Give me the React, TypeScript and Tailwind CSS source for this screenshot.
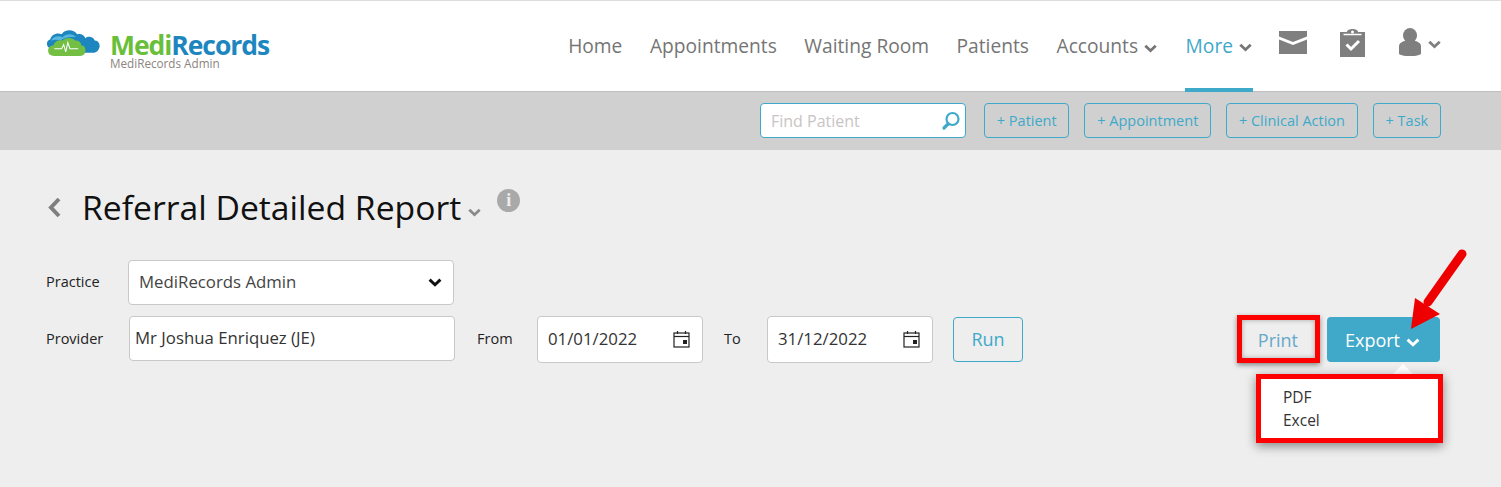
const font = { fontFamily: '"Open Sans", sans-serif' };

function Chevron({ className }: { className: string }) {
  return (
    <svg viewBox="0 0 12 8" className={className} fill="none" stroke="currentColor" strokeWidth="2.6">
      <path d="M1.2 1.4 6 6 10.8 1.4" />
    </svg>
  );
}

function Logo() {
  return (
    <svg width="56" height="29" viewBox="0 0 54 28">
      <path d="M4 19c-3-2-3-7 1-8 1-5 7-7 11-5 3-5 12-5 15 0 4-1 7 1 8 4 3-3 8-1 9 2 4 0 6 5 4 8-1 3-4 4-7 4H30L12 23c-4 0-6-2-8-4z" fill="#1e86bf" />
      <path d="M6 12c2-4 7-5 11-3 3-4 10-4 13 0-6-1-12 0-15 3-3-1-6-1-9 0z" fill="#59b7de" />
      <path d="M9 27c-4 0-6-2-6-5s2-5 5-5c1-4 5-6 9-5 3-3 9-3 12 0 4 0 6 2 6 5 3 0 4 2 4 5s-2 5-5 5z" fill="#72bf44" />
      <path d="M9 20h7l2-4 2 7 2-9 2 6h8" fill="none" stroke="#fff" strokeWidth="1" />
    </svg>
  );
}

function NavLink({ label, caret, active }: { label: string; caret?: boolean; active?: boolean }) {
  return (
    <div className={`flex h-[91px] items-center gap-[6px] ${active ? 'border-b-[4px] border-[#3fa9c9] px-[1px] pt-[4px] text-[#3fa9c9]' : 'pt-[1px] text-[#757575]'}`}>
      <span>{label}</span>
      {caret && <Chevron className="mt-[3px] h-[9px] w-[13px] text-[#757575]" />}
    </div>
  );
}

function ActionButton({ label }: { label: string }) {
  return (
    <button className="h-[35px] rounded-[4px] border border-[#3fa9c9] px-[11.8px] pt-[2px] text-[14.5px] text-[#3fa9c9]">{label}</button>
  );
}

function CalendarIcon() {
  return (
    <svg className="mb-[2px]" width="17" height="18" viewBox="0 0 17 18" fill="none">
      <rect x="1" y="3" width="15" height="14" stroke="#222" strokeWidth="1.2" />
      <path d="M1 6.5h15" stroke="#222" strokeWidth="1.2" />
      <path d="M4.5 1v3M12.5 1v3" stroke="#222" strokeWidth="1.2" />
      <rect x="10" y="10" width="4" height="4" fill="#222" />
    </svg>
  );
}

function DateField({ value }: { value: string }) {
  return (
    <div className="flex h-[47px] w-[166px] items-center justify-between rounded-[4px] border border-[#c8c8c8] bg-white pl-[10px] pr-[12px] text-[16.8px] text-[#333]">
      <span className="mb-[1px]">{value}</span>
      <CalendarIcon />
    </div>
  );
}

export default function App() {
  return (
    <div style={font} className="relative h-[487px] w-[1501px] overflow-hidden bg-[#eeeeee]">
      <header className="flex h-[92px] items-center justify-between border-y border-t-[#dddddd] border-b-[#bfbfbf] bg-white pl-[45px] pr-[60px]">
        <div className="flex items-start gap-[9px]">
          <div className="mt-[5px]">
            <Logo />
          </div>
          <div className="mt-[10px] flex flex-col">
            <span className="text-[26.5px] leading-[24px] font-bold tracking-[-1.05px]">
              <span className="text-[#6abf3a]">Medi</span>
              <span className="text-[#1e86bf]">Records</span>
            </span>
            <span className="text-[11.7px] leading-[13px] text-[#8c8480]">MediRecords Admin</span>
          </div>
        </div>
        <nav className="flex items-start text-[19.2px]">
          <div className="flex gap-[27.5px]">
            <NavLink label="Home" />
            <NavLink label="Appointments" />
            <NavLink label="Waiting Room" />
            <NavLink label="Patients" />
            <NavLink label="Accounts" caret />
            <NavLink label="More" caret active />
          </div>
          <div className="ml-[26px] flex items-start pt-[30px] text-[#7f7f7f]">
            <svg width="28" height="23" viewBox="0 0 28 23" fill="currentColor">
              <path d="M0 0h28v5.500L14 11 0 5.500zM0 8.500l14 5.500 14-5.500V23H0z" />
            </svg>
            <svg className="ml-[33px] mt-[-2px]" width="25" height="28" viewBox="0 0 25 28">
              <path d="M0 3h7c0-4 11-4 11 0h7v25H0z" fill="currentColor" />
              <path d="M3.500 5.500h18" stroke="#fff" strokeWidth="1.500" />
              <circle cx="12.500" cy="3" r="1.500" fill="#fff" />
              <path d="M6.500 15.500l4.500 4.500 8-8" fill="none" stroke="#fff" strokeWidth="3" />
            </svg>
            <svg className="ml-[34px] mt-[-3px]" width="22" height="28" viewBox="0 0 22 28" fill="currentColor">
              <ellipse cx="11" cy="7.500" rx="7" ry="7.500" />
              <path d="M0 18c0-3 4-5 7-5h8c3 0 7 2 7 5v8c-5 3-17 3-22 0z" />
            </svg>
            <Chevron className="ml-[7px] mt-[9px] h-[9px] w-[13px] text-[#7f7f7f]" />
          </div>
        </nav>
      </header>

      <div className="flex h-[58px] items-center justify-end gap-[15px] bg-[#d0d0d0] pb-[2px] pr-[60px]">
        <div className="mr-[3px] flex h-[35px] w-[206px] items-center justify-between rounded-[4px] border border-[#3fa9c9] bg-white pl-[10px] pr-[4px] pt-[2px] text-[16px] text-[#c9c4c4]">
          <span>Find Patient</span>
          <svg width="20" height="20" viewBox="0 0 20 20" fill="none" stroke="#3fa9c9">
            <circle cx="11.500" cy="8" r="6" strokeWidth="2.200" />
            <path d="M7 13 3 17" strokeWidth="3.200" strokeLinecap="round" />
          </svg>
        </div>
        <ActionButton label="+ Patient" />
        <ActionButton label="+ Appointment" />
        <ActionButton label="+ Clinical Action" />
        <ActionButton label="+ Task" />
      </div>

      <main className="px-[46px]">
        <div className="flex h-[82px] items-start pt-[34px]">
          <svg className="ml-[2px] mt-[13px]" width="13" height="21" viewBox="0 0 13 21" fill="none" stroke="#7f7f7f" strokeWidth="4">
            <path d="M11 2 3 10.500l8 8.500" />
          </svg>
          <h1 className="ml-[21px] mt-[-1px] text-[33.7px] leading-[48px] text-[#111]">Referral Detailed Report</h1>
          <Chevron className="ml-[7px] mt-[24px] h-[9px] w-[13px] text-[#8a8a8a]" />
          <div className="ml-[16px] mt-[5px] flex h-[23px] w-[23px] items-center justify-center rounded-full bg-[#a9a9a9] font-['Liberation_Serif'] text-[18px] font-bold text-[#eeeeee]">i</div>
        </div>

        <div className="mt-[28px] flex items-center text-[14.5px] text-[#222]">
          <span className="mb-[2px] w-[82px]">Practice</span>
          <div className="flex h-[45px] w-[326px] items-center justify-between rounded-[4px] border border-[#c8c8c8] bg-white pl-[10px] pr-[11px] text-[16.8px] text-[#444]">
            <span className="mb-[2px]">MediRecords Admin</span>
            <Chevron className="h-[9px] w-[14px] text-[#111]" />
          </div>
        </div>

        <div className="mt-[11px] flex items-center text-[14.5px] text-[#222]">
          <span className="mb-[2px] w-[83px]">Provider</span>
          <div className="mb-[2px] flex h-[45px] w-[326px] items-center rounded-[4px] border border-[#c8c8c8] bg-white pb-[2px] pl-[5px] text-[16.8px] text-[#333]">Mr Joshua Enriquez (JE)</div>
          <span className="mb-[2px] ml-[22px] w-[60px]">From</span>
          <DateField value="01/01/2022" />
          <span className="mb-[2px] ml-[21px] w-[43px]">To</span>
          <DateField value="31/12/2022" />
          <button className="ml-[20px] h-[45px] w-[70px] rounded-[4px] border border-[#3fa9c9] text-[18px] text-[#3fa9c9]">Run</button>
          <div className="ml-auto mr-[15px] flex items-center gap-[29px]">
            <button className="pt-[1px] text-[18px] text-[#65a9c9]">Print</button>
            <button className="flex h-[45px] w-[113px] items-center gap-[6px] rounded-[4px] bg-[#40a8c8] pl-[18px] pt-[1px] text-[18px] text-white">
              Export
              <Chevron className="mt-[4px] h-[9px] w-[14px]" />
            </button>
          </div>
        </div>
      </main>

      {/* dropdown + annotations sit over the page */}
      <div className="absolute left-[1393px] top-[364px] h-0 w-0 border-x-[10px] border-b-[10px] border-x-transparent border-b-white" />
      <div className="absolute left-[1256px] top-[374px] flex h-[69px] w-[187px] flex-col justify-center border-[5px] border-[#ff0000] bg-white pl-[22px] text-[15.5px] leading-[23px] text-[#333] shadow-[0_3px_10px_rgba(0,0,0,0.45)]">
        <span>PDF</span>
        <span>Excel</span>
      </div>
      <div className="absolute left-[1237px] top-[315px] h-[48px] w-[83px] border-[5px] border-[#ff0000] shadow-[0_2px_5px_rgba(0,0,0,0.45),inset_0_0_5px_rgba(0,0,0,0.3)]" />
      <svg className="absolute left-[1400px] top-[240px]" width="75" height="100" viewBox="0 0 75 100" fill="none">
        <path d="M62 14 28 62" stroke="#ee0000" strokeWidth="9" strokeLinecap="round" />
        <path d="M11 89 15 58 40 74z" fill="#ee0000" />
      </svg>
    </div>
  );
}
